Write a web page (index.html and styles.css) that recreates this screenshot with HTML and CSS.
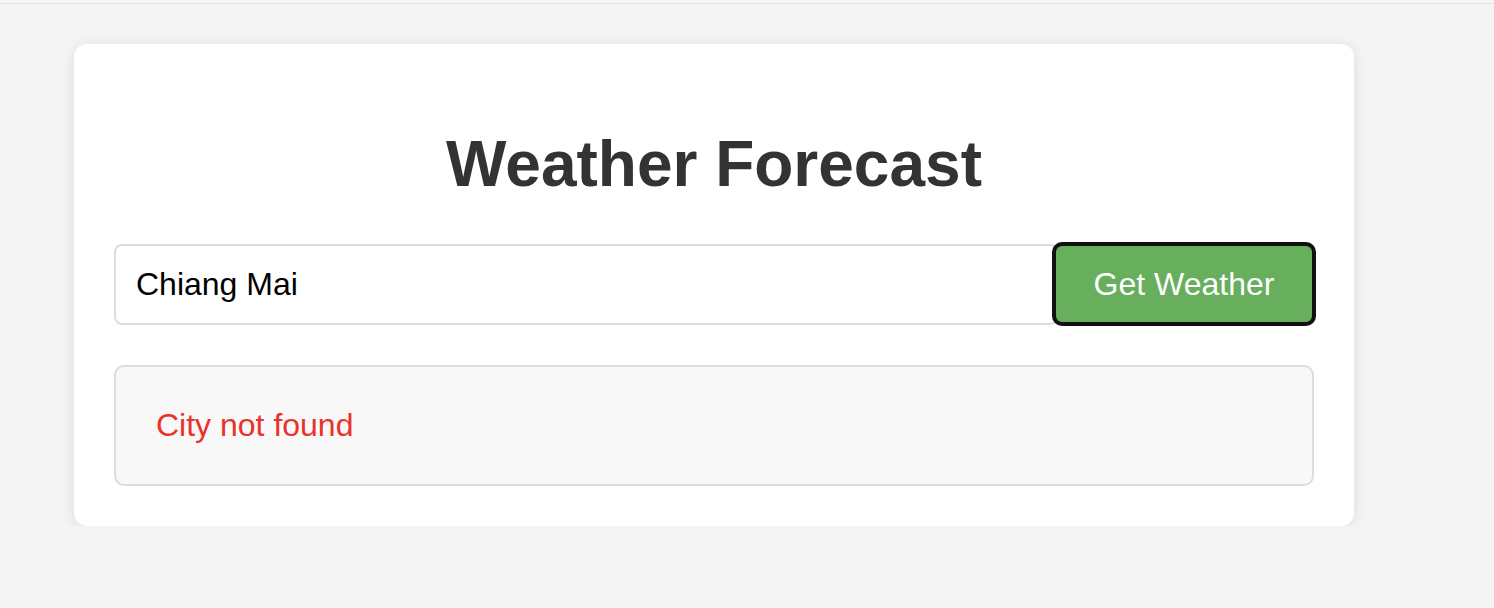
FILE: index.html
```html
<!DOCTYPE html>
<html lang="en">
<head>
<meta charset="utf-8">
<title>Weather Forecast</title>
<link rel="stylesheet" href="styles.css">
</head>
<body>
<div class="topline"></div>
<div class="page">
  <main class="card">
    <h1 class="title">Weather Forecast</h1>
    <div class="search">
      <input class="city-input" type="text" value="Chiang Mai">
      <button class="get-btn" type="button">Get Weather</button>
    </div>
    <div class="result">
      <p class="error">City not found</p>
    </div>
  </main>
</div>
</body>
</html>
```
FILE: styles.css
```css
html, body {
  margin: 0;
  padding: 0;
  background: #f4f4f4;
  font-family: "Liberation Sans", Arial, sans-serif;
}

.topline {
  height: 3px;
  border-bottom: 1px solid #e4e4e4;
}

.page {
  padding: 40px 0 0 74px;
}

.card {
  box-sizing: border-box;
  width: 1280px;
  padding: 40px;
  background: #ffffff;
  border-radius: 13px;
  box-shadow: 0 2px 14px rgba(0, 0, 0, 0.1);
}

.title {
  margin: 43px 0;
  font-size: 64px;
  font-weight: bold;
  color: #333333;
  text-align: center;
  line-height: 74px;
}

.search {
  display: flex;
}

.city-input {
  flex: 1;
  min-width: 0;
  box-sizing: border-box;
  height: 81px;
  margin: 0 -4px 0 0;
  padding: 0 20px;
  border: 2px solid #dddddd;
  border-radius: 8px;
  font-family: "Liberation Sans", Arial, sans-serif;
  font-size: 32px;
  color: #000000;
  background: #ffffff;
  outline: none;
}

.get-btn {
  box-sizing: border-box;
  width: 260px;
  height: 80px;
  margin: 0;
  padding: 0;
  border: 2px solid #111111;
  border-radius: 8px;
  box-shadow: 0 0 0 2px #111111;
  background: #67ae5d;
  color: #ffffff;
  font-family: "Liberation Sans", Arial, sans-serif;
  font-size: 32px;
  cursor: pointer;
  position: relative;
  z-index: 1;
}

.result {
  margin-top: 40px;
  padding: 40px;
  background: #f8f8f8;
  border: 2px solid #dddddd;
  border-radius: 10px;
}

.error {
  margin: 0;
  font-size: 32px;
  line-height: 37px;
  color: #e8322a;
}
```
